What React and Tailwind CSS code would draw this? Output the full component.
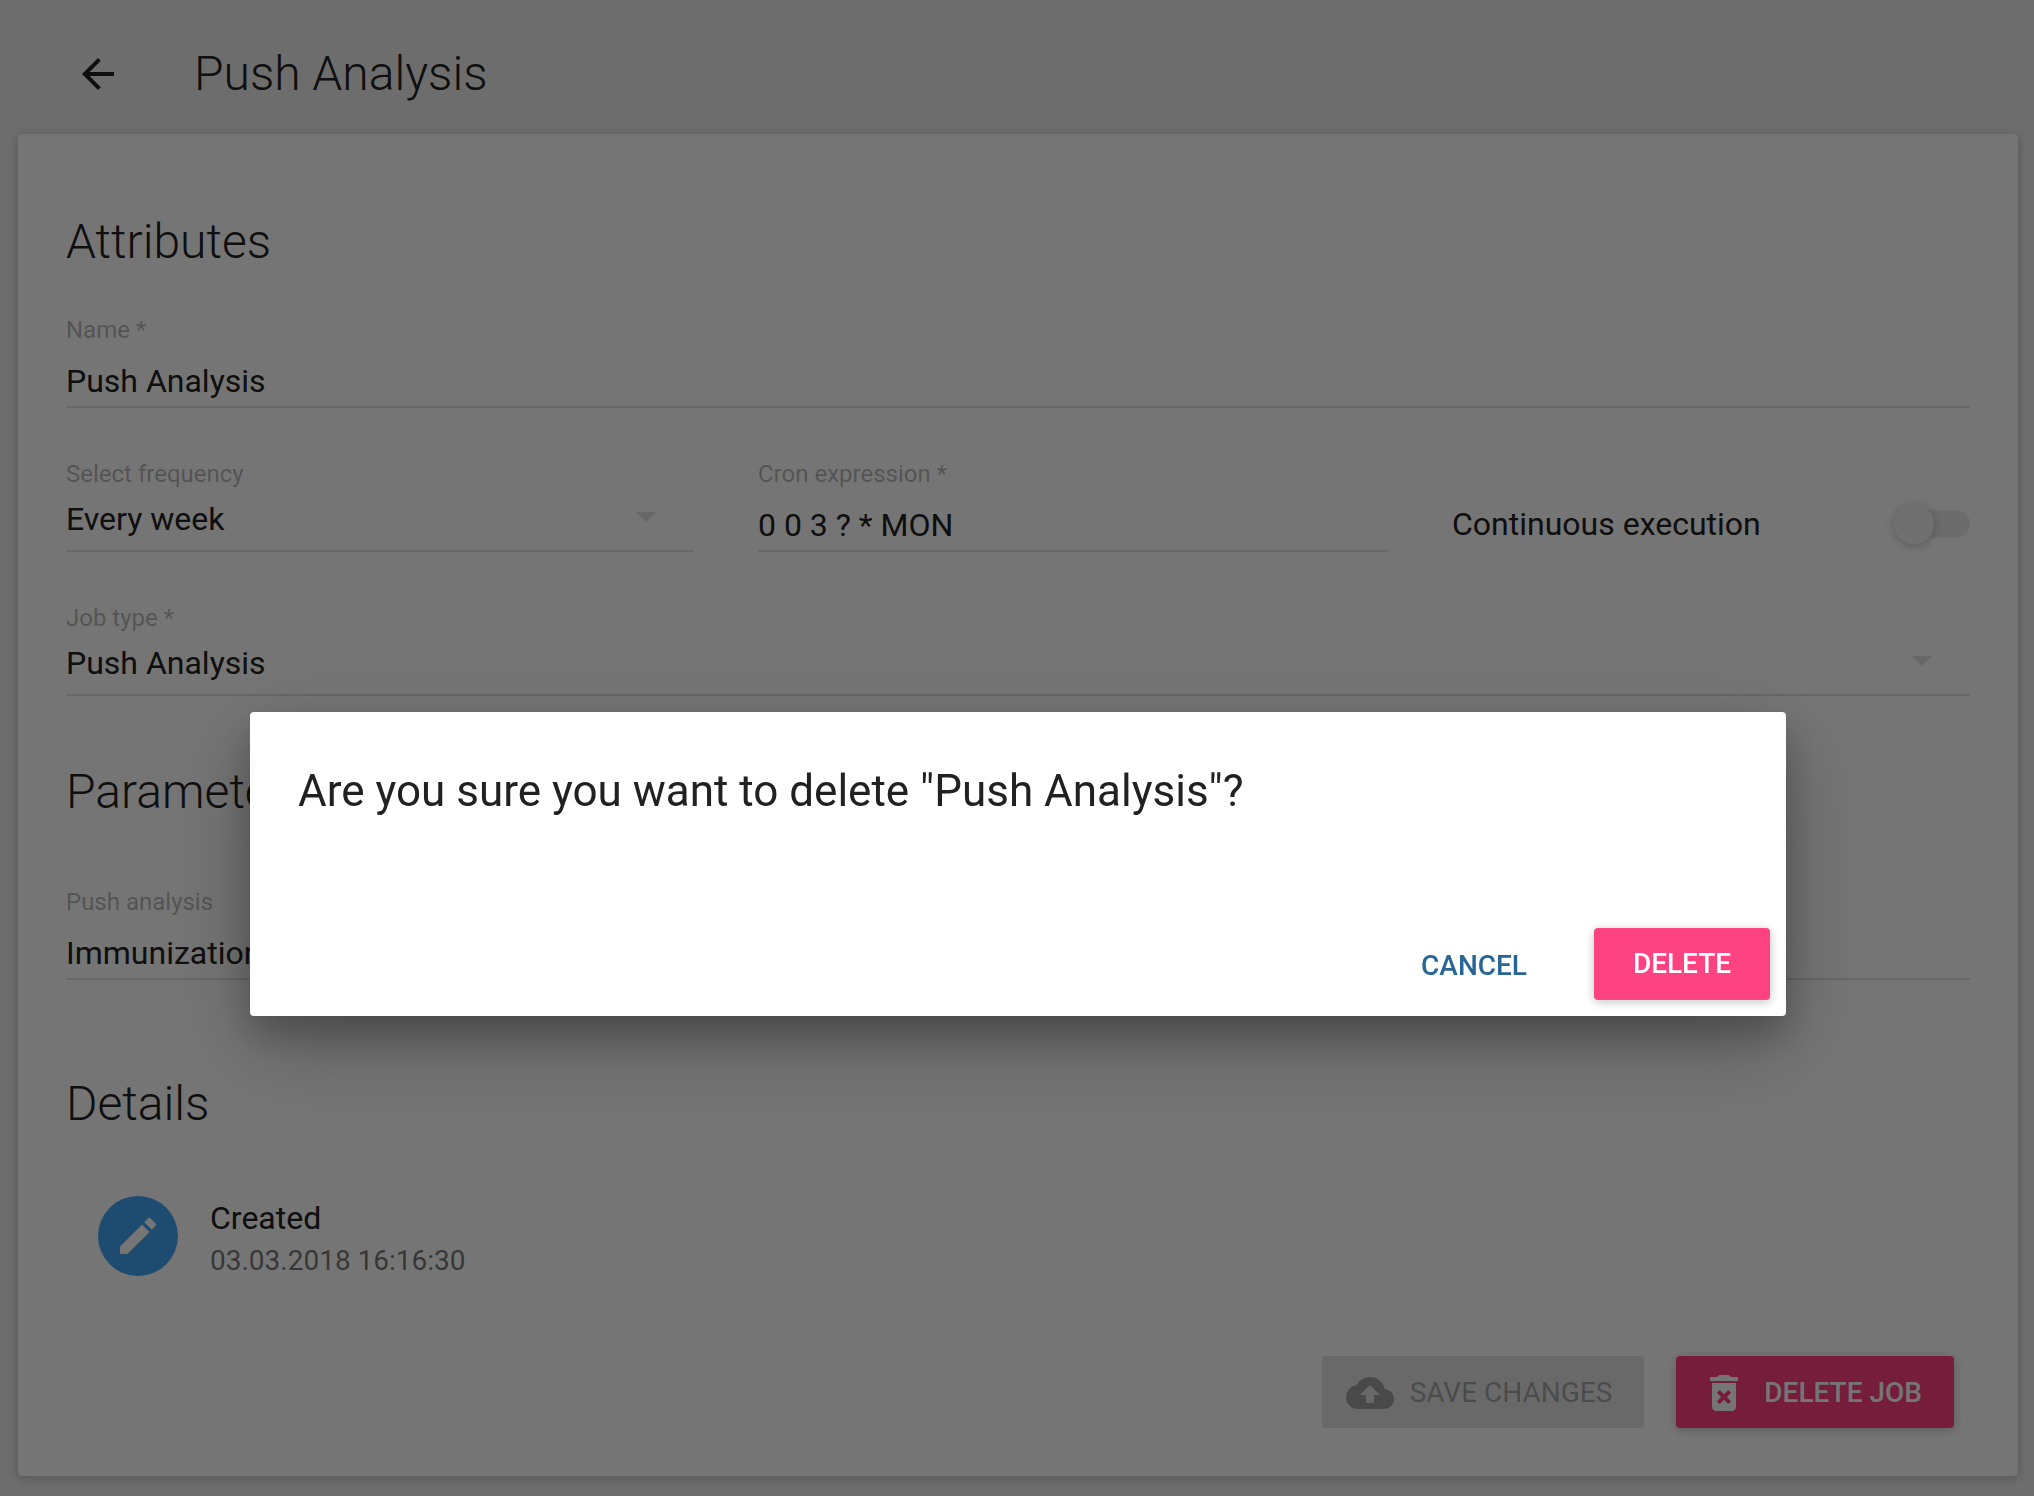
import { useState } from "react";
import {
  MdArrowBack,
  MdArrowDropDown,
  MdCloudUpload,
  MdDeleteForever,
  MdEdit,
} from "react-icons/md";

function Heading({ className = "", children }) {
  return (
    <h2 className={`text-[48px] leading-[64px] font-light ${className}`}>
      {children}
    </h2>
  );
}

function TextField({ id, label, defaultValue }) {
  return (
    <div className="flex h-36 flex-col justify-end pb-4">
      <label htmlFor={id} className="text-2xl leading-7 text-black/30">
        {label}
      </label>
      <input
        id={id}
        type="text"
        defaultValue={defaultValue}
        className="mt-3 h-[52px] w-full border-b-2 border-[#e0e0e0] bg-transparent text-[32px] outline-none"
      />
    </div>
  );
}

function SelectField({ id, label, options }) {
  return (
    <div className="flex h-36 flex-col justify-end pb-4">
      <label htmlFor={id} className="text-2xl leading-7 text-black/30">
        {label}
      </label>
      <div className="grid items-center">
        <select
          id={id}
          className="col-start-1 row-start-1 h-16 w-full appearance-none border-b-2 border-[#e0e0e0] bg-transparent text-[32px] outline-none"
        >
          {options.map((option) => (
            <option key={option}>{option}</option>
          ))}
        </select>
        <MdArrowDropDown className="pointer-events-none col-start-1 row-start-1 mr-6 mb-2 size-12 justify-self-end text-[#e0e0e0]" />
      </div>
    </div>
  );
}

function Toggle({ id, label }) {
  const [on, setOn] = useState(false);
  return (
    <div className="mb-4 flex h-14 items-center justify-between self-end">
      <label htmlFor={id} className="text-[32px] leading-10">
        {label}
      </label>
      <span className="relative flex h-10 w-[76px] items-center">
        <input
          id={id}
          type="checkbox"
          checked={on}
          onChange={() => setOn(!on)}
          className="ml-1 h-7 w-[72px] appearance-none rounded-full bg-[#ebebeb]"
        />
        <span className="pointer-events-none absolute top-0 left-0 size-10 rounded-full bg-[#f5f5f5] shadow-[0_2px_12px_rgba(0,0,0,0.12),0_2px_8px_rgba(0,0,0,0.12)]" />
      </span>
    </div>
  );
}

const raised =
  "shadow-[0_2px_12px_rgba(0,0,0,0.12),0_2px_8px_rgba(0,0,0,0.12)]";

export default function App() {
  return (
    <div className="min-h-screen bg-[#eeeeee] pr-4 pb-5 pl-[18px] font-['Roboto',sans-serif] text-[#212121]">
      <header className="flex items-center gap-12 pt-[26px] pb-3 pl-8">
        <button
          type="button"
          aria-label="Back"
          className="flex size-24 items-center justify-center"
        >
          <MdArrowBack className="size-12" />
        </button>
        <h1 className="text-[48px] leading-[64px] font-light">Push Analysis</h1>
      </header>

      <main
        className={`rounded-[4px] bg-white px-12 pt-[76px] pb-12 ${raised}`}
      >
        <Heading>Attributes</Heading>
        <div className="mt-1.5">
          <TextField id="name" label="Name *" defaultValue="Push Analysis" />
          <div className="grid grid-cols-[628fr_630fr_518fr] gap-16">
            <SelectField
              id="frequency"
              label="Select frequency"
              options={["Every week", "Every day", "Every month"]}
            />
            <TextField
              id="cron"
              label="Cron expression *"
              defaultValue="0 0 3 ? * MON"
            />
            <Toggle id="continuous" label="Continuous execution" />
          </div>
          <SelectField
            id="job-type"
            label="Job type *"
            options={["Push Analysis"]}
          />
        </div>

        <Heading className="mt-12">Parameters</Heading>
        <div className="mt-7">
          <TextField
            id="push-analysis"
            label="Push analysis"
            defaultValue="Immunization"
          />
        </div>

        <Heading className="mt-[76px]">Details</Heading>
        <div className="mt-[60px] flex items-start gap-8 pl-8">
          <div className="flex size-20 items-center justify-center rounded-full bg-[#42a5f5] text-white">
            <MdEdit className="size-12" />
          </div>
          <div className="flex flex-col gap-[3px]">
            <p className="text-[32px] leading-[44px]">Created</p>
            <p className="text-[28px] leading-9 text-black/54">
              03.03.2018 16:16:30
            </p>
          </div>
        </div>

        <div className="mt-[77px] flex justify-end gap-8 pr-4">
          <button
            type="button"
            disabled
            className="flex h-[72px] items-center gap-4 rounded-[4px] bg-[#e5e5e5] pt-0.5 pr-8 pl-6 text-[28px] text-black/30"
          >
            <MdCloudUpload className="size-12" />
            SAVE CHANGES
          </button>
          <button
            type="button"
            className={`flex h-[72px] items-center gap-4 rounded-[4px] bg-[#ff4081] pt-0.5 pr-8 pl-6 text-[28px] font-medium text-white ${raised}`}
          >
            <MdDeleteForever className="size-12" />
            DELETE JOB
          </button>
        </div>
      </main>

      <div className="fixed inset-0 flex flex-col items-center bg-black/54 pt-[712px] pl-0.5">
        <div
          role="dialog"
          aria-modal="true"
          aria-labelledby="confirm-title"
          className="w-[1536px] max-w-[76%] rounded-[4px] bg-white shadow-[0_28px_90px_rgba(0,0,0,0.25),0_20px_36px_rgba(0,0,0,0.22)]"
        >
          <h3
            id="confirm-title"
            className="px-12 pt-12 pb-[98px] text-[44px] leading-[62px]"
          >
            Are you sure you want to delete "Push Analysis"?
          </h3>
          <div className="flex items-center justify-end gap-8 p-4 pt-2">
            <button
              type="button"
              className="h-[72px] min-w-44 px-8 pt-1 text-[28px] font-medium text-[#276696]"
            >
              CANCEL
            </button>
            <button
              type="button"
              className={`h-[72px] min-w-44 rounded-[4px] bg-[#ff4382] px-8 text-[28px] font-medium text-white ${raised}`}
            >
              DELETE
            </button>
          </div>
        </div>
      </div>
    </div>
  );
}
